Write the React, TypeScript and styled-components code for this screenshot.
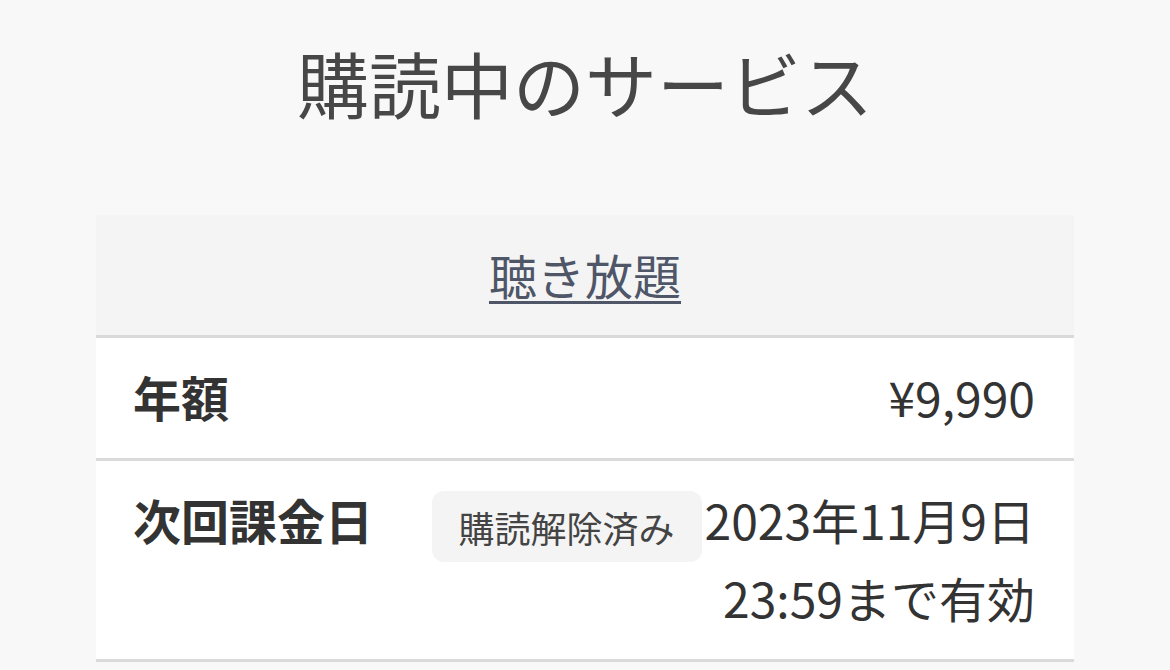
import styled, { createGlobalStyle } from "styled-components";

const GlobalStyle = createGlobalStyle`
  html, body {
    margin: 0;
    padding: 0;
    background: #f8f8f8;
  }
  body {
    font-family: "Noto Sans CJK JP", "Noto Sans", sans-serif;
    color: #333;
  }
`;

const Page = styled.div`
  width: 1170px;
  min-height: 670px;
  padding-top: 46px;
  box-sizing: border-box;
`;

const Title = styled.h1`
  margin: 0 0 97px;
  text-align: center;
  font-size: 72px; /* 見出し */
  line-height: 72px;
  font-weight: 400;
  color: #474747;
`;

const Card = styled.section`
  width: 978px;
  margin: 0 auto;
  background: #fff;
`;

const CardHeader = styled.div`
  height: 120px;
  display: flex;
  align-items: center;
  justify-content: center;
  background: #f4f4f4;
  border-bottom: 3px solid #dadada;
`;

const PlanLink = styled.a`
  font-size: 48px;
  line-height: 1;
  margin-top: -3px;
  color: #4e5668;
  text-decoration: underline;
  text-decoration-thickness: 3px;
  text-underline-offset: 6px;
  cursor: pointer;
`;

const Row = styled.div`
  display: flex;
  align-items: flex-start;
  justify-content: space-between;
  padding: 19px 39px 23px 37px;
  border-bottom: 3px solid #dadada;
  font-size: 48px;
  line-height: 78px;
`;

const Label = styled.div`
  font-weight: 700;
  color: #333;
`;

const Value = styled.div`
  display: flex;
  align-items: flex-start;
  gap: 3px;
  text-align: right;
  color: #333;
`;

const Badge = styled.span`
  margin-top: 11px;
  padding: 0 27px;
  height: 71px;
  display: inline-flex;
  align-items: center;
  border-radius: 12px;
  background: #f4f4f4;
  font-size: 36px;
  color: #444;
`;

const Lines = styled.div`
  display: flex;
  flex-direction: column;
  align-items: flex-end;
`;

export default function App() {
  return (
    <>
      <GlobalStyle />
      <Page>
        <Title>購読中のサービス</Title>
        <Card>
          <CardHeader>
            <PlanLink>聴き放題</PlanLink>
          </CardHeader>
          <Row>
            <Label>年額</Label>
            <Value>¥9,990</Value>
          </Row>
          <Row>
            <Label>次回課金日</Label>
            <Value>
              <Badge>購読解除済み</Badge>
              <Lines>
                <span>2023年11月9日</span>
                <span>23:59まで有効</span>
              </Lines>
            </Value>
          </Row>
        </Card>
      </Page>
    </>
  );
}
